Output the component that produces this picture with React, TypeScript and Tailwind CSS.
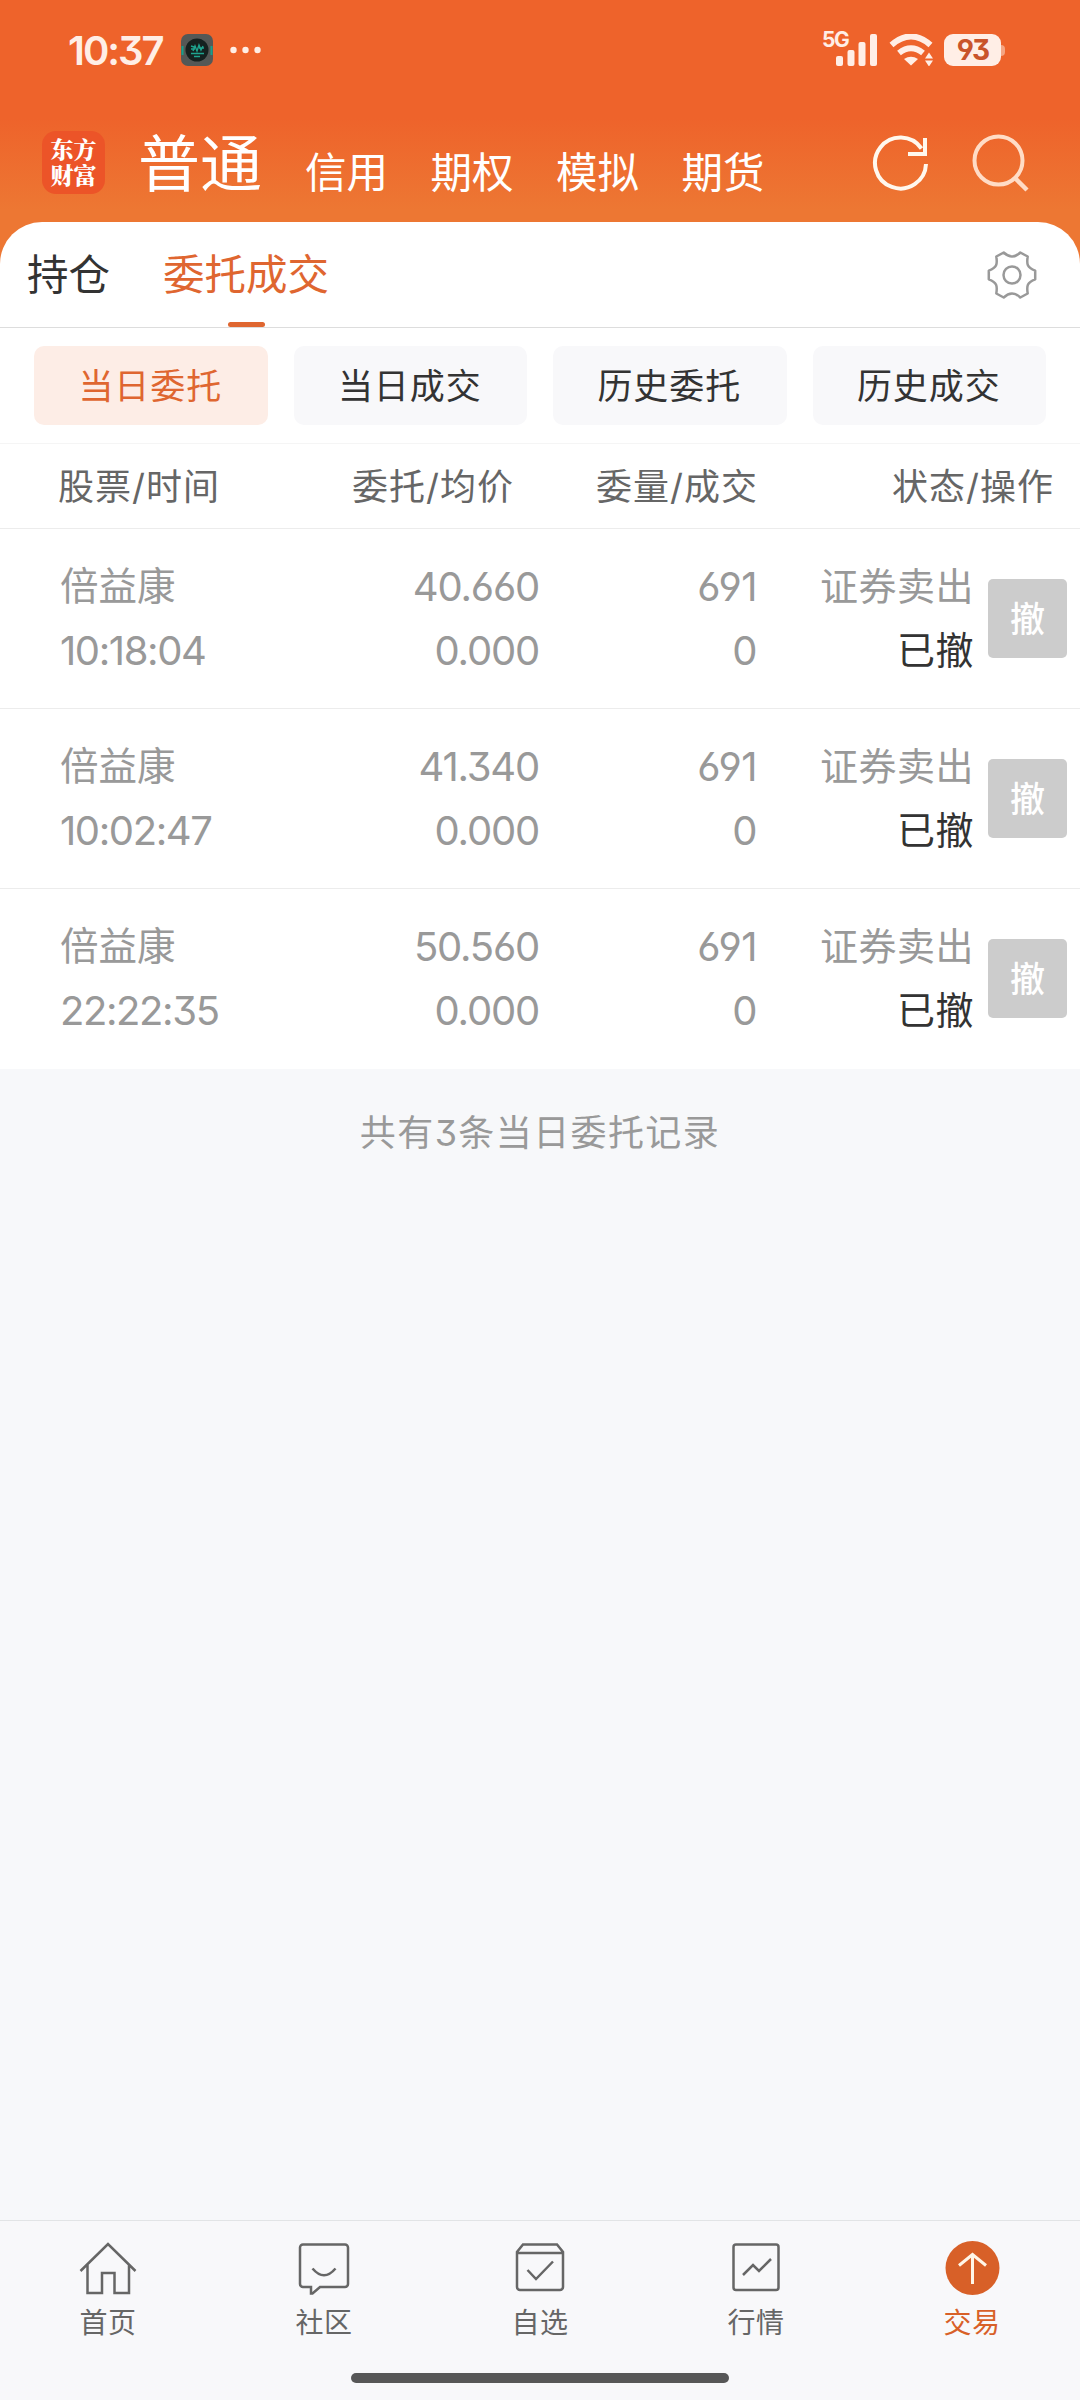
import type { ReactNode } from "react";

type Order = {
  name: string;
  time: string;
  price: string;
  avg: string;
  amount: string;
  dealt: string;
  side: string;
  status: string;
};

const accounts = ["信用", "期权", "模拟", "期货"];

const filters = ["当日委托", "当日成交", "历史委托", "历史成交"];

const orders: Order[] = [
  { name: "倍益康", time: "10:18:04", price: "40.660", avg: "0.000", amount: "691", dealt: "0", side: "证券卖出", status: "已撤" },
  { name: "倍益康", time: "10:02:47", price: "41.340", avg: "0.000", amount: "691", dealt: "0", side: "证券卖出", status: "已撤" },
  { name: "倍益康", time: "22:22:35", price: "50.560", avg: "0.000", amount: "691", dealt: "0", side: "证券卖出", status: "已撤" },
];

function StatusBar() {
  return (
    <div className="flex h-[100px] items-center pl-[68px] pr-[75px] text-[#ffeee6]">
      <span className="w-[113px] pt-[2px] text-[40px] font-semibold leading-none tracking-[-2px]">10:37</span>
      <svg width="32" height="32" viewBox="0 0 32 32">
        <rect width="32" height="32" rx="7" fill="#545856" />
        <path d="M1.500 12v9M30.500 12v9" stroke="#17a08a" strokeWidth="2" />
        <circle cx="16" cy="16" r="11.500" fill="#15211f" />
        <path d="M10 12l3 1M12 17l2-5 2 5 2-6 2 5 2-4M10 15h4M18 14h5M10 19.500h13M13 22.500h6" stroke="#1fa58f" strokeWidth="1.400" fill="none" />
      </svg>
      <svg width="32" height="8" viewBox="0 0 32 8" className="ml-[17px]" fill="#ffeee6">
        <circle cx="3.500" cy="4" r="3.200" />
        <circle cx="15.500" cy="4" r="3.200" />
        <circle cx="27.500" cy="4" r="3.200" />
      </svg>

      <div className="ml-auto flex items-center">
        <div className="relative mr-[12px] h-[32px] w-[55px]">
          <span className="absolute left-0 top-[-5px] text-[21px] font-bold leading-none tracking-[-1.500px]">5G</span>
          <svg width="55" height="32" viewBox="0 0 55 32" fill="#ffeee6">
            <rect x="14" y="22" width="7" height="10" rx="2" />
            <rect x="25.500" y="16" width="7" height="16" rx="2" />
            <rect x="36.500" y="8" width="7" height="24" rx="2" />
            <rect x="48" y="0" width="7" height="32" rx="2" />
          </svg>
        </div>
        <svg width="46" height="32" viewBox="0 0 46 32" className="mr-[9px]">
          <path d="M2.500 11Q22 -6 41.500 11" stroke="#ffeee6" strokeWidth="6" fill="none" />
          <path d="M10 19Q22 9.500 34 19" stroke="#ffeee6" strokeWidth="6" fill="none" />
          <path d="M15 25Q22 20.500 29 25L22 31.500Z" fill="#ffeee6" />
          <path d="M36 24.500l4-6 4 6zM36 26.500l4 6 4-6z" fill="#ffeee6" />
        </svg>
        <div className="flex h-8 w-[57px] items-center justify-center rounded-[9px] bg-[#ffeee6] text-[28px] font-bold leading-none tracking-[-2px] text-[#c9542b]">
          93
        </div>
        <div className="h-[11px] w-1 rounded-r-[4px] bg-[#f5a583]" />
      </div>
    </div>
  );
}

function AccountBar() {
  return (
    <div className="flex h-[122px] items-start pl-[42px] text-white">
      {/* the mark wraps onto two lines inside its fixed width */}
      <p className="mt-[31px] h-[63px] w-[63px] break-all rounded-[14px] bg-[#ec5428] px-[8px] pt-[5px] text-center font-['Noto_Serif_CJK_SC','Noto_Sans_CJK_SC',sans-serif] text-[23px] font-black leading-[26px]">
        东方财富
      </p>
      <span className="ml-[33px] mt-[34px] text-[62px] leading-[62px]">普通</span>
      <div className="ml-[43px] mt-[50px] flex gap-[42.500px] text-[41.500px] leading-[46px]">
        {accounts.map((item) => (
          <span key={item}>{item}</span>
        ))}
      </div>
      <svg width="60" height="60" viewBox="0 0 60 60" className="ml-[106px] mt-[33px]" fill="none" stroke="#fff8ee" strokeWidth="4">
        <path d="M55 31A25.500 25.500 0 1 1 50.500 15.500" />
        <path d="M54 5v16H37" />
      </svg>
      <svg width="60" height="60" viewBox="0 0 60 60" className="ml-[39px] mt-[33px]" fill="none" stroke="#ffdcc6" strokeWidth="4">
        <circle cx="28.500" cy="27.500" r="24" />
        <path d="M45 45L57 57" strokeWidth="4.500" />
      </svg>
    </div>
  );
}

function GearIcon() {
  return (
    <svg width="52" height="52" viewBox="0 0 52 52" fill="none" stroke="#999" strokeWidth="2.500" strokeLinejoin="round">
      <path d="M17.700 3.500Q26 11.500 34.300 3.500L41.700 7.500C40.500 15 41 18.500 49.200 21.700V30.300C41 33.500 40.500 37 41.700 44.500L34.300 48.500Q26 40.500 17.700 48.500L10.300 44.500C11.500 37 11 33.500 2.800 30.300V21.700C11 18.500 11.500 15 10.300 7.500Z" />
      <circle cx="26" cy="26" r="8.500" />
    </svg>
  );
}

function OrderRow({ order, last }: { order: Order; last: boolean }) {
  return (
    <div className={`flex h-[180px] items-start text-[#999] ${last ? "" : "border-b border-[#ececec]"}`}>
      <div className="w-[240px] pl-[60px] pt-[26px] leading-[64px]">
        <p className="-mt-px mb-px text-[38.500px]">{order.name}</p>
        <p className="whitespace-nowrap text-[40px] tracking-[-1.400px]">{order.time}</p>
      </div>
      <div className="w-[300px] pr-px pt-[26px] text-right text-[40px] leading-[64px] tracking-[-1.200px]">
        <p>{order.price}</p>
        <p>{order.avg}</p>
      </div>
      <div className="w-[217px] pt-[26px] text-right text-[40px] leading-[64px] tracking-[-0.500px]">
        <p>{order.amount}</p>
        <p>{order.dealt}</p>
      </div>
      <div className="w-[217px] pt-[25px] text-right text-[38px] leading-[64px] tracking-[0.500px]">
        <p>{order.side}</p>
        <p className="text-[#333]">{order.status}</p>
      </div>
      <button className="ml-[14px] mt-[50px] h-[79px] w-[79px] rounded-[5px] bg-[#ccc] pt-px text-[35px] font-medium text-white">撤</button>
    </div>
  );
}

function NavItem({ label, active, children }: { label: string; active?: boolean; children: ReactNode }) {
  return (
    <div className={`flex flex-1 flex-col items-center pt-[17px] text-[28px] leading-[40px] ${active ? "text-[#d86028]" : "text-[#666]"}`}>
      <svg width="60" height="60" viewBox="0 0 60 60" fill="none" stroke="currentColor" strokeWidth="2.500">
        {children}
      </svg>
      <span className="mt-[5px] tracking-[0.500px]">{label}</span>
    </div>
  );
}

export default function App() {
  return (
    <div className="flex h-[2400px] w-[1080px] flex-col overflow-hidden bg-[#f7f8fa] font-[Inter,'Noto_Sans_CJK_SC',sans-serif] [font-feature-settings:'cv03','cv04','cv09']">
      {/* header */}
      <div className="bg-[linear-gradient(180deg,#ee632b_0px,#ee632b_118px,#ed7733_210px,#ed7733_100%)]">
        <StatusBar />
        <AccountBar />

        {/* tabs */}
        <div className="flex h-[106px] rounded-t-[42px] border-b border-[#ddd] bg-white pl-[27px] pr-[42px] text-[41.500px]">
          <span className="pt-[22px] leading-[62px] text-[#333]">持仓</span>
          <div className="ml-[53px] flex flex-col items-center justify-between">
            <span className="pt-[22px] leading-[62px] text-[#df6630]">委托成交</span>
            <span className="h-[5px] w-[37px] rounded-full bg-[#df6630]" />
          </div>
          <div className="ml-auto pt-[27px]">
            <GearIcon />
          </div>
        </div>
      </div>

      <div className="bg-white">
        {/* filter buttons */}
        <div className="flex h-[116px] gap-[26px] border-b border-[#f5f5f5] px-[34px] pt-[18px]">
          {filters.map((item, index) => (
            <button
              key={item}
              className={`h-[79px] flex-1 rounded-[10px] pr-px pt-px text-[35px] tracking-[0.900px] ${index === 0 ? "bg-[#fdede6] text-[#df6630]" : "bg-[#f8f8fa] text-[#333]"}`}
            >
              {item}
            </button>
          ))}
        </div>

        {/* table head */}
        <div className="flex h-[85px] items-center border-b border-[#ececec] pt-px text-[36px] tracking-[1px] text-[#666]">
          <span className="w-[240px] whitespace-nowrap pl-[58px]">股票/时间</span>
          <span className="w-[274px] text-right">委托/均价</span>
          <span className="w-[244px] text-right">委量/成交</span>
          <span className="w-[296px] text-right">状态/操作</span>
        </div>

        {orders.map((order, index) => (
          <OrderRow key={order.time} order={order} last={index === orders.length - 1} />
        ))}
      </div>

      <p className="mt-[38px] text-center text-[36px] leading-[52px] tracking-[1.400px] text-[#999]">共有3条当日委托记录</p>

      {/* bottom navigation */}
      <div className="mt-auto h-[180px] border-t border-[#e2e4e6] bg-[#f8f8fa]">
        <div className="flex h-[152px]">
          <NavItem label="首页">
            <path d="M2.500 33L30 6L57.500 33M9.500 27V55H24V35H36.500V55H51V27" />
          </NavItem>
          <NavItem label="社区">
            <path d="M9 6.500H51a3 3 0 0 1 3 3V46a3 3 0 0 1-3 3H26L18.500 55.500H17V49H9a3 3 0 0 1-3-3V9.500a3 3 0 0 1 3-3Z" />
            <path d="M18.500 30.500Q30 44 41.500 30.500" />
          </NavItem>
          <NavItem label="自选">
            <path d="M13 6.500H47L53 14V49a3 3 0 0 1-3 3H10a3 3 0 0 1-3-3V14ZM7 15H53M17.500 32L26 41L43 23.500" />
          </NavItem>
          <NavItem label="行情">
            <rect x="7.500" y="6.500" width="45" height="45.500" rx="2.500" />
            <path d="M17 37L27 27L33 33L45 21" />
          </NavItem>
          <NavItem label="交易" active>
            <circle cx="30.500" cy="30" r="27" fill="#d86028" stroke="none" />
            <path d="M30.500 46V17M17 27.500L30.500 16.500L44 27.500" stroke="#fff6e8" strokeWidth="3" />
          </NavItem>
        </div>
        <div className="mx-auto h-[10px] w-[378px] rounded-full bg-[#575757]" />
      </div>
    </div>
  );
}
